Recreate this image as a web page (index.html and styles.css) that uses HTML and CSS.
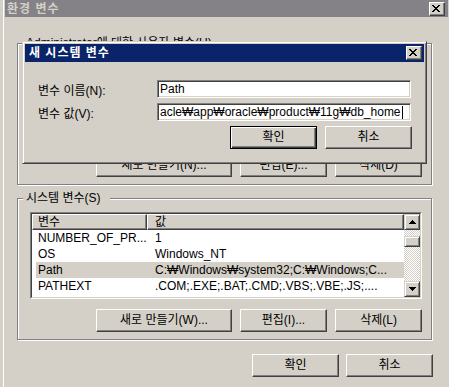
FILE: index.html
```html
<!DOCTYPE html>
<html lang="ko">
<head>
  <meta charset="UTF-8" />
  <title>환경 변수</title>
  <link rel="stylesheet" href="styles.css">
</head>
<body>
  <div class="window">
    <div class="titlebar inactive">
      <span class="caption">환경 변수</span>
      <button class="close-btn">
        <svg width="8" height="7" viewBox="0 0 8 7" shape-rendering="crispEdges"><path d="M0 0h2v1H0zM6 0h2v1H6zM1 1h2v1H1zM5 1h2v1H5zM2 2h4v1H2zM3 3h2v1H3zM2 4h4v1H2zM1 5h2v1H1zM5 5h2v1H5zM0 6h2v1H0zM6 6h2v1H6z"/></svg>
      </button>
    </div>
    <div class="client">
      <div class="groupbox first">
        <span class="group-label">Administrator에 대한 사용자 변수(U)</span>
        <div class="listview">
          <div class="list-inner"></div>
        </div>
        <div class="group-buttons">
          <button class="btn wide">새로 만들기(N)...</button>
          <button class="btn">편집(E)...</button>
          <button class="btn">삭제(D)</button>
        </div>
      </div>
      <div class="groupbox">
        <span class="group-label">시스템 변수(S)</span>
        <div class="listview">
          <div class="list-inner">
            <div class="list-main">
              <div class="list-header">
                <div class="header-cell col-name">변수</div>
                <div class="header-cell col-value">값</div>
              </div>
              <div class="row"><span>NUMBER_OF_PR...</span><span>1</span></div>
              <div class="row"><span>OS</span><span>Windows_NT</span></div>
              <div class="row selected"><span>Path</span><span>C:₩Windows₩system32;C:₩Windows;C...</span></div>
              <div class="row"><span>PATHEXT</span><span>.COM;.EXE;.BAT;.CMD;.VBS;.VBE;.JS;....</span></div>
              <div class="row"><span>PROCESSOR_A...</span><span>AMD64</span></div>
            </div>
            <div class="scrollbar">
              <div class="scroll-btn">
                <svg width="7" height="4" viewBox="0 0 7 4" shape-rendering="crispEdges"><path d="M3 0h1v1h1v1h1v1h1v1H0V3h1V2h1V1h1z"/></svg>
              </div>
              <div class="scroll-track">
                <div class="scroll-thumb"></div>
              </div>
              <div class="scroll-btn">
                <svg width="7" height="4" viewBox="0 0 7 4" shape-rendering="crispEdges"><path d="M0 0h7v1H6v1H5v1H4v1H3V3H2V2H1V1H0z"/></svg>
              </div>
            </div>
          </div>
        </div>
        <div class="group-buttons">
          <button class="btn wide">새로 만들기(W)...</button>
          <button class="btn">편집(I)...</button>
          <button class="btn">삭제(L)</button>
        </div>
      </div>
      <div class="window-buttons">
        <button class="btn">확인</button>
        <button class="btn">취소</button>
      </div>
    </div>
  </div>

  <!-- child dialog lies over the main window -->
  <div class="dialog">
    <div class="titlebar active">
      <span class="caption">새 시스템 변수</span>
      <button class="close-btn">
        <svg width="8" height="7" viewBox="0 0 8 7" shape-rendering="crispEdges"><path d="M0 0h2v1H0zM6 0h2v1H6zM1 1h2v1H1zM5 1h2v1H5zM2 2h4v1H2zM3 3h2v1H3zM2 4h4v1H2zM1 5h2v1H1zM5 5h2v1H5zM0 6h2v1H0zM6 6h2v1H6z"/></svg>
      </button>
    </div>
    <div class="dialog-body">
      <div class="field-row">
        <label class="field-label">변수 이름(N):</label>
        <div class="field"><span>Path</span></div>
      </div>
      <div class="field-row">
        <label class="field-label">변수 값(V):</label>
        <div class="field"><span>acle₩app₩oracle₩product₩11g₩db_home</span><span class="caret"></span></div>
      </div>
      <div class="dialog-buttons">
        <button class="btn default">확인</button>
        <button class="btn">취소</button>
      </div>
    </div>
  </div>
</body>
</html>
```

FILE: styles.css
```css
* {
  box-sizing: border-box;
}

body {
  margin: 0;
  width: 449px;
  height: 387px;
  overflow: hidden;
  position: relative;
  background-color: #d4d0c8;
  font-family: "Liberation Sans", "Noto Sans CJK KR", sans-serif;
  font-size: 12px;
  color: #000;
}

button {
  font: inherit;
  color: inherit;
  margin: 0;
  padding: 0;
  background-color: #d4d0c8;
}

.window {
  margin-left: 3px;
  border-left: 1px solid #fff;
  padding-left: 1px;
  height: 387px;
}

/* title bars */
.titlebar {
  display: flex;
  align-items: center;
  justify-content: space-between;
}

.titlebar.inactive {
  height: 17px;
  margin-right: 1px;
  padding: 0 3px 0 2px;
  background-color: #848286;
  color: #d4d0c8;
}

.titlebar.active {
  height: 18px;
  padding: 0 2px 0 4px;
  background-color: #0a246a;
  color: #fff;
}

.caption {
  font-weight: bold;
  letter-spacing: 1px;
  line-height: 14px;
}

.close-btn {
  width: 16px;
  height: 14px;
  padding: 2px 0 0 2px;
  border: 1px solid;
  border-color: #fff #404040 #404040 #fff;
  box-shadow: inset -1px -1px #808080;
  display: flex;
  align-items: flex-start;
  justify-content: flex-start;
}

.close-btn svg,
.scroll-btn svg {
  display: block;
}

/* classic button */
.btn {
  width: 87px;
  height: 23px;
  border: 1px solid;
  border-color: #fff #404040 #404040 #fff;
  box-shadow: inset -1px -1px #808080;
  line-height: 19px;
  text-align: center;
}

.btn.wide {
  width: 136px;
}

.btn.default {
  border-color: #000;
  box-shadow: inset 1px 1px #fff, inset -1px -1px #404040, inset -2px -2px #808080;
}

/* main window */
.client {
  padding-left: 12px;
}

.groupbox {
  position: relative;
  width: 415px;
  margin-top: 13px;
  padding: 13px 9px 7px 12px;
  border: 1px solid #808080;
  box-shadow: inset 1px 1px #fff, 1px 1px #fff;
}

.groupbox.first {
  margin-top: 26px;
}

.group-label {
  position: absolute;
  top: -7px;
  left: 5px;
  padding: 0 9px 0 3px;
  line-height: 12px;
  background-color: #d4d0c8;
  white-space: nowrap;
}

.listview {
  width: 392px;
  height: 87px;
  border: 1px solid;
  border-color: #808080 #fff #fff #808080;
}

.list-inner {
  height: 100%;
  display: flex;
  border: 1px solid;
  border-color: #404040 #d4d0c8 #d4d0c8 #404040;
  background-color: #fff;
}

.list-main {
  flex: 1;
  overflow: hidden;
}

.list-header {
  display: flex;
  height: 16px;
}

.header-cell {
  height: 16px;
  line-height: 14px;
  border: 1px solid;
  border-color: #fff #404040 #404040 #fff;
  box-shadow: inset -1px -1px #808080;
  background-color: #d4d0c8;
}

.col-name {
  width: 115px;
  padding-left: 5px;
}

.col-value {
  flex: 1;
  padding-left: 7px;
}

.row {
  display: grid;
  grid-template-columns: 117px 1fr;
  height: 16px;
  line-height: 16px;
  margin-left: 4px;
  padding-left: 2px;
  white-space: nowrap;
  overflow: hidden;
}

.row.selected {
  background-color: #d4d0c8;
}

.scrollbar {
  width: 16px;
  display: flex;
  flex-direction: column;
}

.scroll-btn {
  width: 16px;
  height: 16px;
  border: 1px solid;
  border-color: #d4d0c8 #404040 #404040 #d4d0c8;
  box-shadow: inset 1px 1px #fff, inset -1px -1px #808080;
  background-color: #d4d0c8;
  display: flex;
  align-items: center;
  justify-content: center;
}

.scroll-track {
  flex: 1;
  padding-top: 6px;
  background-color: #d4d0c8;
  background-image: conic-gradient(#fff 25%, #d4d0c8 0 50%, #fff 0 75%, #d4d0c8 0);
  background-size: 2px 2px;
}

.scroll-thumb {
  height: 11px;
  border: 1px solid;
  border-color: #d4d0c8 #404040 #404040 #d4d0c8;
  box-shadow: inset 1px 1px #fff, inset -1px -1px #808080;
  background-color: #d4d0c8;
}

.group-buttons {
  display: flex;
  justify-content: flex-end;
  gap: 8px;
  margin-top: 10px;
}

.window-buttons {
  width: 416px;
  display: flex;
  justify-content: flex-end;
  gap: 7px;
  margin-top: 14px;
}

/* child dialog */
.dialog {
  position: absolute;
  left: 22px;
  top: 41px;
  width: 405px;
  height: 123px;
  padding: 2px;
  border: 1px solid;
  border-color: #d4d0c8 #404040 #404040 #d4d0c8;
  box-shadow: inset 1px 1px #fff, inset -1px -1px #808080;
  background-color: #d4d0c8;
}

.dialog-body {
  padding: 18px 12px 0 13px;
}

.field-row {
  display: flex;
  align-items: center;
  height: 18px;
  margin-bottom: 5px;
}

.field-label {
  width: 119px;
  white-space: nowrap;
}

.field {
  width: 254px;
  height: 18px;
  padding-left: 2px;
  display: flex;
  align-items: center;
  overflow: hidden;
  white-space: nowrap;
  border: 1px solid;
  border-color: #808080 #fff #fff #808080;
  box-shadow: inset 1px 1px #404040, inset -1px -1px #d4d0c8;
  background-color: #fff;
}

.caret {
  width: 1px;
  height: 13px;
  margin-left: 1px;
  background-color: #000;
}

.dialog-buttons {
  display: flex;
  justify-content: flex-end;
  gap: 8px;
  margin-top: 2px;
}
```
